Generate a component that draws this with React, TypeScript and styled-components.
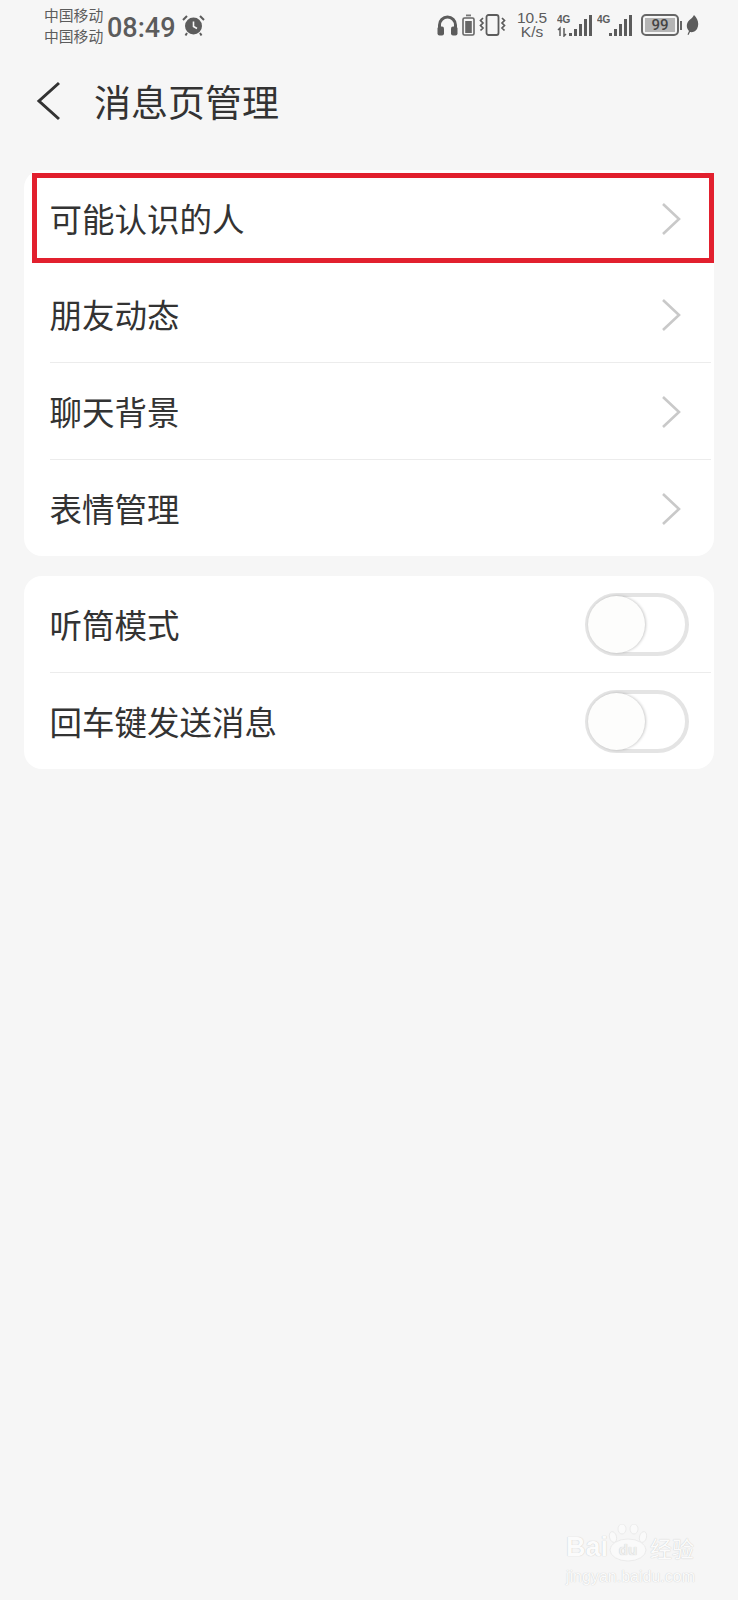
import styled, { createGlobalStyle } from "styled-components";

const GlobalStyle = createGlobalStyle`
  html, body {
    margin: 0;
    padding: 0;
    background: #f6f6f6;
  }
  * {
    box-sizing: border-box;
  }
`;

const font = `"Noto Sans CJK SC", "Noto Sans", sans-serif`;

const BackIcon = () => (
  <svg width="26" height="40" viewBox="0 0 26 40" fill="none">
    <path d="M23 2 L3 20 L23 38" stroke="#333" strokeWidth="3" />
  </svg>
);

const Chevron = () => (
  <svg width="20" height="34" viewBox="0 0 20 34" fill="none">
    <path d="M2 2 L18 17 L2 32" stroke="#c9c9c9" strokeWidth="2.6" />
  </svg>
);

const AlarmIcon = () => (
  <svg width="23" height="23" viewBox="0 0 23 23" fill="none">
    <circle cx="11.5" cy="12" r="8.5" fill="#5c5c5c" />
    <path d="M11.5 7.5 V12.5 L15 14.5" stroke="#f6f6f6" strokeWidth="1.6" />
    <path d="M1 6 L5 2 M22 6 L18 2 M5 19 L3.5 21.5 M18 19 L19.5 21.5" stroke="#5c5c5c" strokeWidth="2" />
  </svg>
);

const HeadphonesIcon = () => (
  <svg width="21" height="21" viewBox="0 0 21 21" fill="none">
    <path d="M2.5 13 V10 A8 8 0 0 1 18.5 10 V13" stroke="#5c5c5c" strokeWidth="3" />
    <rect x="0.5" y="11.5" width="6.5" height="9" rx="2" fill="#5c5c5c" />
    <rect x="14" y="11.5" width="6.5" height="9" rx="2" fill="#5c5c5c" />
  </svg>
);

const SmallBattery = () => (
  <svg width="13" height="22" viewBox="0 0 13 22" fill="none">
    <rect x="4" y="0.5" width="5" height="1.8" fill="#777" />
    <rect x="1" y="4" width="11" height="17" rx="1.5" stroke="#666" strokeWidth="1.6" />
    <rect x="3.2" y="7" width="6.6" height="12" fill="#666" />
  </svg>
);

const VibrateIcon = () => (
  <svg width="27" height="22" viewBox="0 0 27 22" fill="none">
    <rect x="7.5" y="1" width="12" height="20" rx="2" stroke="#5c5c5c" strokeWidth="1.8" />
    <path
      d="M4 4 L1.5 6.5 L4 9 L1.5 11.5 L4 14 L1.5 16.5 M23 4 L25.5 6.5 L23 9 L25.5 11.5 L23 14 L25.5 16.5"
      stroke="#5c5c5c"
      strokeWidth="1.7"
    />
  </svg>
);

const SignalBars = ({ arrows }: { arrows?: boolean }) => (
  <svg width="36" height="24" viewBox="0 0 36 24" fill="#5c5c5c">
    <text x="0" y="10" fontSize="10" fontWeight="700" fontFamily="Liberation Sans, sans-serif">
      4G
    </text>
    {arrows && <path d="M3 23 V15 L1 17 M7 15 V23 L9 21" stroke="#5c5c5c" strokeWidth="1.5" fill="none" />}
    <rect x="12" y="20" width="3" height="3" />
    <rect x="17" y="16" width="3" height="7" />
    <rect x="22" y="11" width="3" height="12" />
    <rect x="27" y="6" width="3" height="17" />
    <rect x="32" y="2" width="3" height="21" />
  </svg>
);

const LeafIcon = () => (
  <svg width="13" height="20" viewBox="0 0 13 20">
    <path d="M8 0 C12 4 13.5 9 11 14 C9 17 6 17.5 4 17 L2.5 20 L1.5 19.5 L3 16 C0 13 0 8 3.5 5 C5 4 7 2 8 0 Z" fill="#5c5c5c" />
  </svg>
);

const PawIcon = () => (
  <svg width="42" height="38" viewBox="0 0 42 38" fill="#fbfbfb" stroke="#e6e6e6" strokeWidth="0.8">
    <ellipse cx="6" cy="13" rx="3.5" ry="5.5" transform="rotate(-15 6 13)" />
    <ellipse cx="15" cy="5" rx="4" ry="5" />
    <ellipse cx="27" cy="5" rx="4" ry="5" />
    <ellipse cx="36" cy="13" rx="3.5" ry="5.5" transform="rotate(15 36 13)" />
    <ellipse cx="21" cy="26" rx="18" ry="11" />
    <text x="21" y="31" fontSize="15" fontWeight="700" textAnchor="middle" fontFamily="Liberation Sans, sans-serif" fill="#efefef" stroke="none">
      du
    </text>
  </svg>
);

const items = ["可能认识的人", "朋友动态", "聊天背景", "表情管理"];
const toggles = ["听筒模式", "回车键发送消息"];

export default function App() {
  return (
    <Page>
      <GlobalStyle />
      <StatusBar>
        <Carriers>
          <span>中国移动</span>
          <span>中国移动</span>
        </Carriers>
        <Time>08:49</Time>
        <AlarmIcon />
        <StatusRight>
          <HeadphonesIcon />
          <SmallBattery />
          <VibrateIcon />
          <Speed>
            <span>10.5</span>
            <span>K/s</span>
          </Speed>
          <SignalBars arrows />
          <SignalBars />
          <Battery>
            <BatteryBody>
              <BatteryLevel>99</BatteryLevel>
            </BatteryBody>
            <BatteryCap />
          </Battery>
          <LeafIcon />
        </StatusRight>
      </StatusBar>

      <Header>
        <BackIcon />
        <Title>消息页管理</Title>
      </Header>

      <Cards>
        <Card>
          {items.map((label, i) => (
            <Row key={label} $highlighted={i === 0} $divider={i > 0 && i < items.length - 1}>
              <Label>{label}</Label>
              <Chevron />
            </Row>
          ))}
        </Card>
        <Card>
          {toggles.map((label, i) => (
            <Row key={label} $divider={i === 0}>
              <Label>{label}</Label>
              <Switch>
                <Knob />
              </Switch>
            </Row>
          ))}
        </Card>
      </Cards>

      <Watermark>
        <WatermarkLogo>
          <span>Bai</span>
          <PawIcon />
          <span>经验</span>
        </WatermarkLogo>
        <WatermarkUrl>jingyan.baidu.com</WatermarkUrl>
      </Watermark>
    </Page>
  );
}

const Page = styled.div`
  position: relative;
  width: 738px;
  height: 1600px;
  overflow: hidden;
  background: #f6f6f6;
  font-family: ${font};
  color: #333;
`;

const StatusBar = styled.div`
  height: 50px;
  padding-left: 44px;
  display: flex;
  align-items: center;
  color: #5c5c5c;
`;

const Carriers = styled.div`
  display: flex;
  flex-direction: column;
  margin-top: -1px;
  font-size: 14.8px;
  line-height: 21px;
  width: 63px;
`;

const Time = styled.div`
  font-family: Roboto, sans-serif;
  font-size: 27px;
  font-weight: 500;
  width: 75px;
  margin-top: 5px;
`;

const StatusRight = styled.div`
  margin-left: auto;
  padding-right: 39px;
  display: flex;
  align-items: center;
  gap: 4px;
`;

const Speed = styled.div`
  display: flex;
  flex-direction: column;
  align-items: center;
  width: 32px;
  margin: 0 5px 0 6px;
  font-family: "Liberation Sans", sans-serif;
  font-size: 15.5px;
  line-height: 14px;
`;

const Battery = styled.div`
  display: flex;
  align-items: center;
  gap: 1px;
  margin-left: 4px;
`;

const BatteryBody = styled.div`
  width: 38px;
  height: 22px;
  padding: 2px;
  border: 2px solid #666;
  border-radius: 5px;
`;

const BatteryLevel = styled.div`
  height: 100%;
  background: #b5b5b5;
  color: #444;
  font-family: Roboto, sans-serif;
  font-size: 15px;
  font-weight: 500;
  line-height: 14px;
  text-align: center;
`;

const BatteryCap = styled.div`
  width: 2px;
  height: 9px;
  background: #666;
`;

const Header = styled.div`
  height: 102px;
  padding: 0 0 0 36px;
  display: flex;
  align-items: center;
  gap: 32px;
`;

const Title = styled.h1`
  margin: 0;
  font-size: 37px;
  font-weight: 400;
  color: #333;
`;

const Cards = styled.div`
  margin: 18px 24px 0;
  display: flex;
  flex-direction: column;
  gap: 20px;
`;

const Card = styled.div`
  background: #fff;
  border-radius: 18px;
`;

const Row = styled.div<{ $highlighted?: boolean; $divider?: boolean }>`
  position: relative;
  height: 96.5px;
  margin: 0 3px 0 25.5px;
  padding: 0 22px 1px 0;
  display: flex;
  align-items: center;
  justify-content: space-between;
  ${(p) => p.$divider && "border-bottom: 1px solid #ececec;"}

  ${(p) =>
    p.$highlighted &&
    `
    &::after {
      content: "";
      position: absolute;
      left: -17.5px;
      right: -3px;
      top: 3px;
      bottom: 4px;
      border: 5px solid #e2202e;
    }
  `}

  svg {
    margin: 3px 8px 0 0;
  }
`;

const Label = styled.span`
  font-size: 32.5px;
  font-weight: 400;
  color: #333;
`;

const Switch = styled.div`
  position: relative;
  width: 104px;
  height: 63px;
  margin-top: 3px;
  border: 4px solid #e4e4e4;
  border-radius: 32px;
  background: #fff;
`;

const Knob = styled.div`
  position: absolute;
  left: -1px;
  top: -1px;
  width: 57px;
  height: 57px;
  border-radius: 50%;
  background: #fdfdfc;
  box-shadow: 1px 0 3px rgba(0, 0, 0, 0.22);
`;

const Watermark = styled.div`
  position: absolute;
  left: 566px;
  top: 1528px;
  width: 132px;
  display: flex;
  flex-direction: column;
  align-items: flex-start;
  opacity: 0.85;
`;

const WatermarkLogo = styled.div`
  display: flex;
  align-items: center;
  height: 38px;
  color: #fdfdfd;
  font-family: "Liberation Sans", sans-serif;
  font-size: 27px;
  font-weight: 700;
  white-space: nowrap;
  text-shadow: 0 0 1px rgba(0, 0, 0, 0.28);

  svg {
    margin: -8px 1px 0 -1px;
  }

  span:last-child {
    font-family: ${font};
    font-size: 22px;
    font-weight: 400;
  }
`;

const WatermarkUrl = styled.div`
  margin-top: 2px;
  color: #fdfdfd;
  font-family: "Liberation Sans", sans-serif;
  font-size: 16px;
  white-space: nowrap;
  text-shadow: 0 0 1px rgba(0, 0, 0, 0.25);
`;
